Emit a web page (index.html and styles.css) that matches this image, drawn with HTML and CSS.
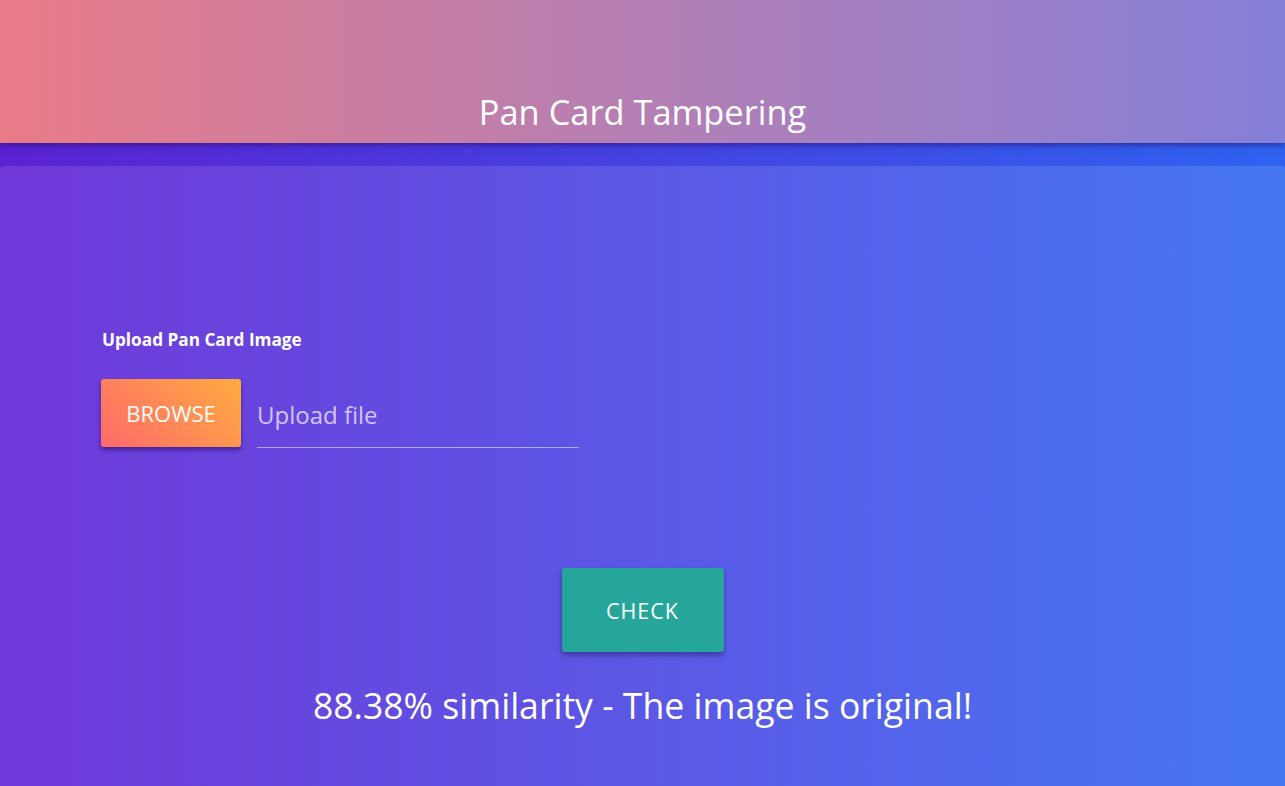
FILE: index.html
```html
<!DOCTYPE html>
<html>
<head>
<meta charset="utf-8">
<link rel="stylesheet" href="styles.css">
</head>
<body>
<header class="topbar">
  <h1 class="title">Pan Card Tampering</h1>
</header>
<main class="page">
  <section class="card">
    <form class="upload">
      <label class="upload-label">Upload Pan Card Image</label>
      <div class="file-row">
        <span class="browse">BROWSE</span>
        <div class="file-path">Upload file</div>
      </div>
    </form>
    <div class="actions">
      <button class="check" type="button">CHECK</button>
    </div>
    <p class="result">88.38% similarity - The image is original!</p>
  </section>
</main>
</body>
</html>
```
FILE: styles.css
```css
html, body {
  margin: 0;
  padding: 0;
  height: 100%;
  overflow: hidden;
}
body {
  font-family: "Open Sans", "Noto Sans", sans-serif;
  background: linear-gradient(90deg, #5a22d3 0%, #2f62f0 100%);
  color: #fff;
}
.topbar {
  position: relative;
  z-index: 2;
  height: 143px;
  background: linear-gradient(90deg, #e97b87 0%, #b47fb4 50%, #857fd8 100%);
  box-shadow: 0 2px 6px rgba(30, 10, 90, 0.55);
  display: flex;
  align-items: flex-end;
  justify-content: center;
}
.title {
  margin: 0 0 8px 0;
  font-weight: 400;
  font-size: 34.4px;
  line-height: 46px;
  color: #fff;
}
.page {
  padding-top: 23px;
  height: calc(100% - 166px);
}
.card {
  height: 100%;
  box-sizing: border-box;
  border-radius: 4px 4px 0 0;
  background: linear-gradient(90deg, #7038d8 0%, #4677f3 100%);
  padding: 163px 101px 0 101px;
}
.upload-label {
  display: block;
  font-weight: 700;
  font-size: 17.2px;
  line-height: 22px;
  margin-left: 1px;
}
.file-row {
  display: flex;
  align-items: flex-start;
  margin-top: 28px;
  gap: 16px;
}
.browse {
  width: 140px;
  height: 68px;
  display: flex;
  align-items: center;
  justify-content: center;
  border-radius: 3px;
  background: linear-gradient(45deg, #ff6a6a 0%, #ffac40 100%);
  box-shadow: 0 3px 4px rgba(20, 0, 60, 0.45);
  font-size: 22px;
  color: #fff;
}
.file-path {
  width: 322px;
  height: 66px;
  padding-top: 2px;
  border-bottom: 1px solid rgba(255, 255, 255, 0.5);
  font-size: 24px;
  color: rgba(255, 255, 255, 0.7);
  display: flex;
  align-items: center;
}
.actions {
  display: flex;
  justify-content: center;
  margin-top: 120px;
}
.check {
  width: 162px;
  height: 84px;
  border: none;
  border-radius: 3px;
  background: #26a69a;
  color: #fff;
  font-family: inherit;
  font-size: 21.5px;
  letter-spacing: 1px;
  box-shadow: 0 3px 5px rgba(20, 0, 60, 0.4);
}
.result {
  margin: 30px 0 0 0;
  text-align: center;
  font-size: 35.6px;
  line-height: 46px;
}
```
